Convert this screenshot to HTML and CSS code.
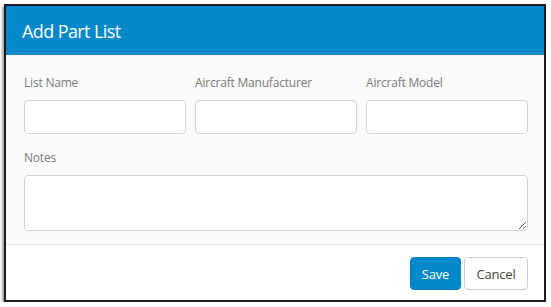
FILE: index.html
```html
<!DOCTYPE html>
<html>
<head>
    <title>Add Part List</title>
    <link rel="stylesheet" href="styles.css">
</head>
<body>
    <div class="modal">
        <div class="modal-header">
            <h2>Add Part List</h2>
        </div>

        <div class="modal-body">
            <div class="row">
                <div class="field">
                    <label for="listName">List Name</label>
                    <input type="text" id="listName">
                </div>
                <div class="field">
                    <label for="manufacturer">Aircraft Manufacturer</label>
                    <input type="text" id="manufacturer">
                </div>
                <div class="field">
                    <label for="model">Aircraft Model</label>
                    <input type="text" id="model">
                </div>
            </div>

            <div class="field notes">
                <label for="notes">Notes</label>
                <textarea id="notes"></textarea>
            </div>
        </div>

        <div class="modal-footer">
            <button class="btn btn-primary">Save</button>
            <button class="btn btn-default">Cancel</button>
        </div>
    </div>
</body>
</html>
```

FILE: styles.css
```css
body {
    font-family: "Open Sans", Arial, sans-serif;
    margin: 0;
    padding: 4px 0 0 4px;
    background-color: #ffffff;
}

.modal {
    width: 538px;
    border: 2px solid #1c1c1c;
    background: #fafafa;
    box-shadow: -2px 2px 2px rgba(0,0,0,0.35);
}

.modal-header {
    background: #0389ca;
    height: 49px;
    padding: 0 16px;
    display: flex;
    align-items: center;
}

.modal-header h2 {
    margin: 0;
    color: #ffffff;
    font-size: 18px;
    font-weight: 400;
    letter-spacing: -0.6px;
}

.modal-body {
    padding: 19px 16px 13px 18px;
}

.row {
    display: grid;
    grid-template-columns: repeat(3, 1fr);
    gap: 9px;
    margin-bottom: 15px;
}

label {
    display: block;
    font-size: 12px;
    line-height: 17px;
    color: #7a7a7a;
    letter-spacing: -0.2px;
    margin-bottom: 9px;
}

input[type="text"],
textarea {
    display: block;
    width: 100%;
    box-sizing: border-box;
    border: 1px solid #cfd3d8;
    border-radius: 4px;
    background: #ffffff;
    font-family: inherit;
    font-size: 13px;
    padding: 6px 10px;
}

input[type="text"] {
    height: 34px;
}

textarea {
    height: 56px;
    resize: vertical;
}

.modal-footer {
    background: #ffffff;
    border-top: 1px solid #e3e3e3;
    padding: 12px 16px 10px;
    display: flex;
    justify-content: flex-end;
    gap: 3px;
}

.btn {
    height: 33px;
    font-family: inherit;
    font-size: 13px;
    border-radius: 4px;
    padding: 0 10px;
    letter-spacing: -0.2px;
    cursor: pointer;
}

.btn-primary {
    background: #0288cb;
    color: #ffffff;
    border: 1px solid #0280c0;
    width: 51px;
}

.btn-default {
    background: #ffffff;
    color: #444444;
    border: 1px solid #cccccc;
    width: 64px;
}
```
